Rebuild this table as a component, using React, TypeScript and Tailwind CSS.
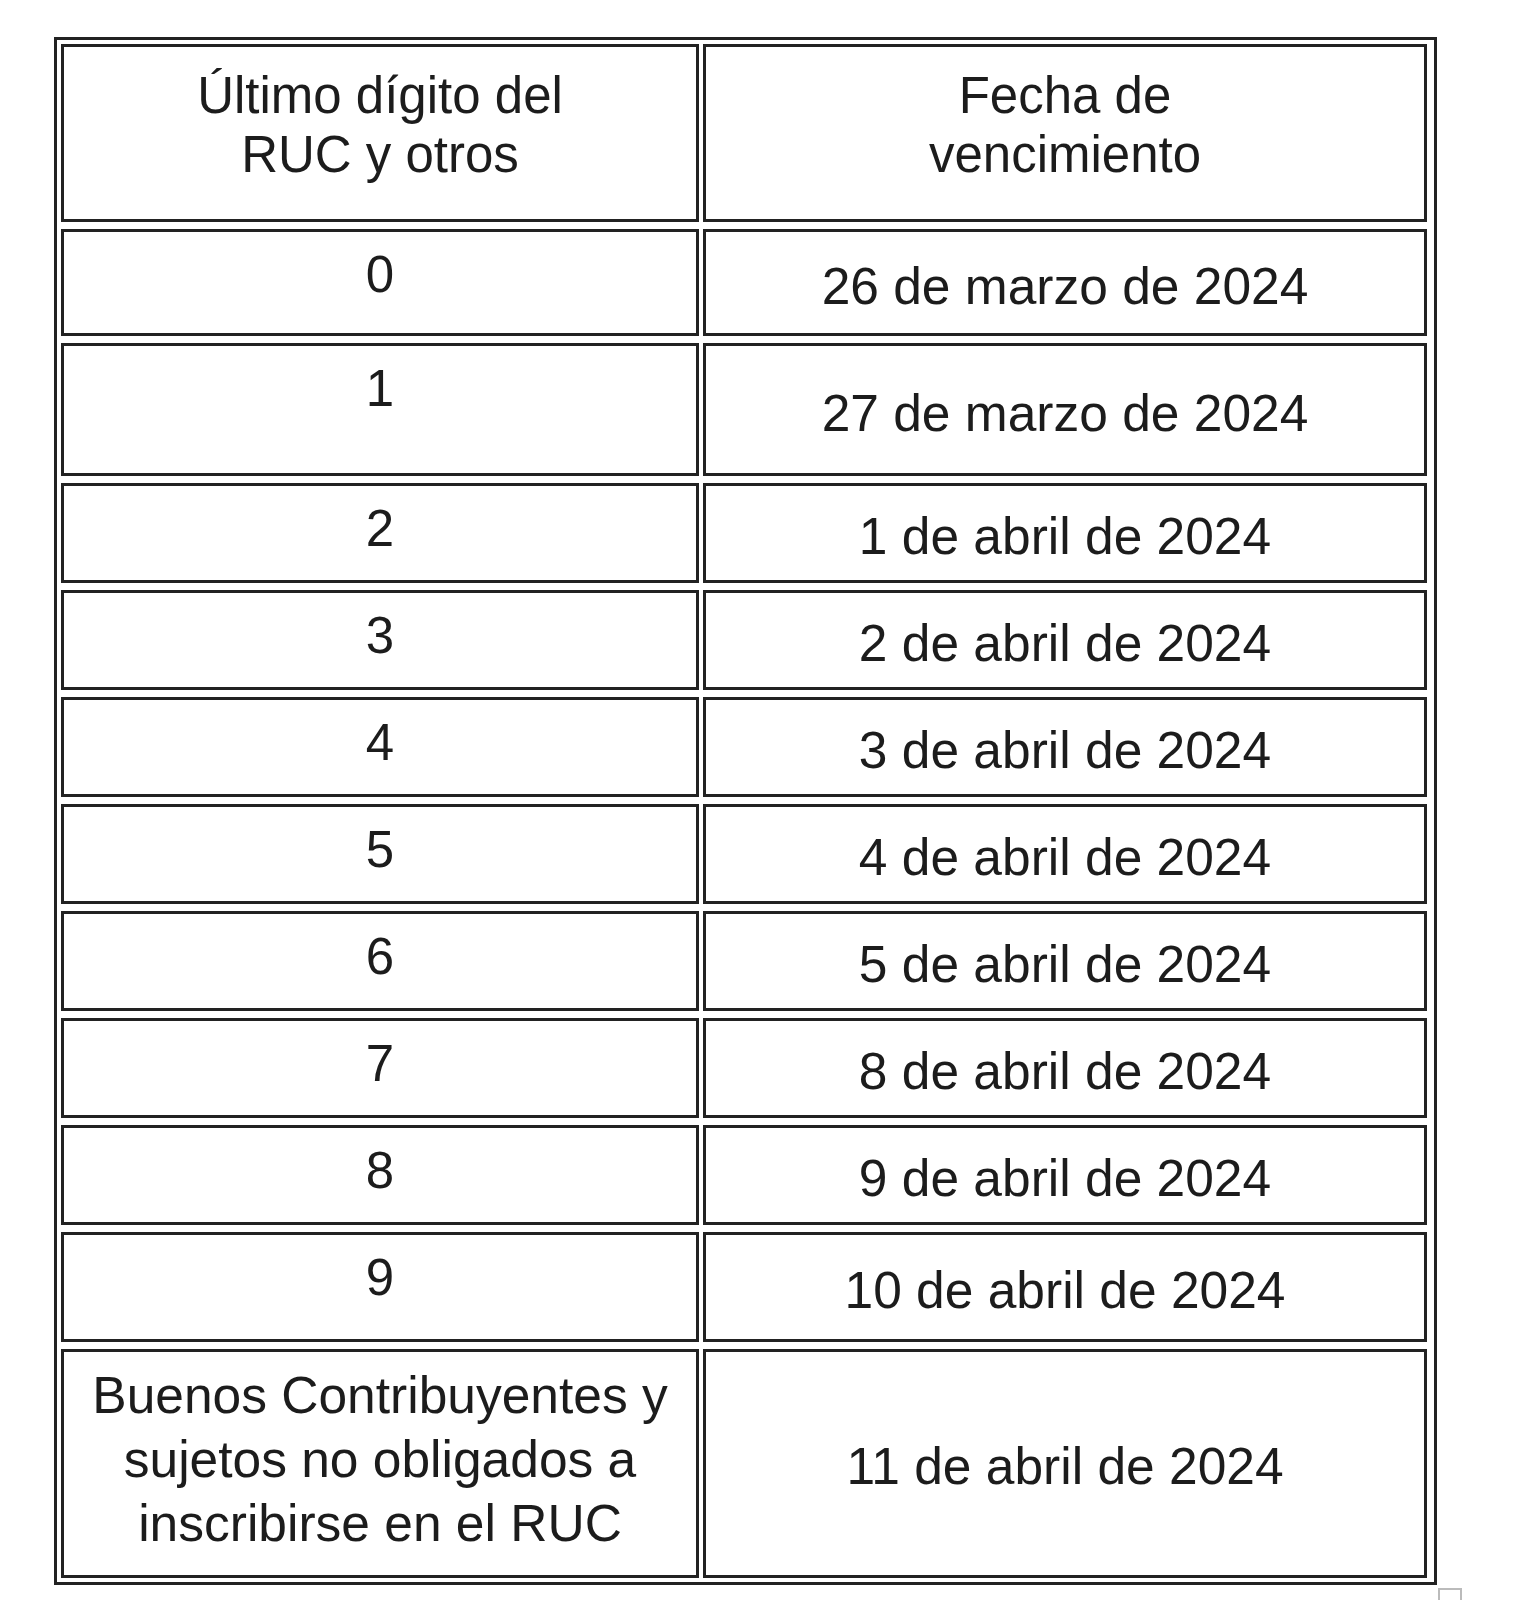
import React from "react";

type Row = { left: React.ReactNode; right: React.ReactNode; h: string };

const rows: Row[] = [
  { left: "0", right: "26 de marzo de 2024", h: "h-[107px]" },
  { left: "1", right: "27 de marzo de 2024", h: "h-[133px]" },
  { left: "2", right: "1 de abril de 2024", h: "h-[100px]" },
  { left: "3", right: "2 de abril de 2024", h: "h-[100px]" },
  { left: "4", right: "3 de abril de 2024", h: "h-[100px]" },
  { left: "5", right: "4 de abril de 2024", h: "h-[100px]" },
  { left: "6", right: "5 de abril de 2024", h: "h-[100px]" },
  { left: "7", right: "8 de abril de 2024", h: "h-[100px]" },
  { left: "8", right: "9 de abril de 2024", h: "h-[100px]" },
  { left: "9", right: "10 de abril de 2024", h: "h-[110px]" },
];

export default function App() {
  return (
    <div
      className="w-full min-h-[1600px] bg-white pt-[37px] pl-[54px] text-[#1c1c1c]"
      style={{ fontFamily: '"Liberation Sans", Arial, sans-serif' }}
    >
      <div className="w-[1383px] border-[3px] border-[#222] pl-[4px] pr-[7px] py-[4px] grid grid-cols-[638px_724px] gap-x-[4px] gap-y-[7px]">
        {/* header */}
        <div className="h-[178px] border-[3px] border-[#222] pt-[19px] text-center text-[51px] leading-[59px]">
          Último dígito del
          <br />
          RUC y otros
        </div>
        <div className="h-[178px] border-[3px] border-[#222] pt-[19px] text-center text-[51px] leading-[59px]">
          Fecha de
          <br />
          vencimiento
        </div>

        {rows.map((r, i) => (
          <React.Fragment key={i}>
            <div className={`${r.h} border-[3px] border-[#222] pt-[12px] text-center text-[51px] leading-[62px]`}>
              {r.left}
            </div>
            <div className={`${r.h} border-[3px] border-[#222] pt-[6px] flex items-center justify-center text-[51.5px] leading-[62px]`}>
              {r.right}
            </div>
          </React.Fragment>
        ))}

        <div className="h-[229px] border-[3px] border-[#222] pt-[11px] px-2 text-center text-[51.5px] leading-[64px]">
          Buenos Contribuyentes y sujetos no obligados a inscribirse en el RUC
        </div>
        <div className="h-[229px] border-[3px] border-[#222] pt-[5px] flex items-center justify-center text-[51.5px] leading-[62px]">
          11 de abril de 2024
        </div>
      </div>
      <div className="ml-[1384px] mt-[3px] w-[24px] h-[24px] border-2 border-[#bbb]" />
    </div>
  );
}
